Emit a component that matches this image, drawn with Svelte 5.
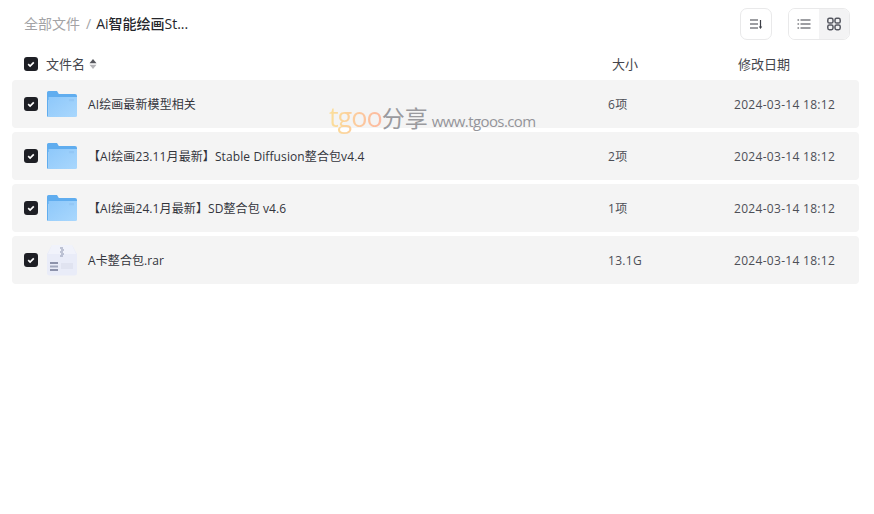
<script>
  const rows = [
    { name: 'AI绘画最新模型相关', size: '6项', type: 'folder' },
    { name: '【AI绘画23.11月最新】Stable Diffusion整合包v4.4', size: '2项', type: 'folder' },
    { name: '【AI绘画24.1月最新】SD整合包 v4.6', size: '1项', type: 'folder' },
    { name: 'A卡整合包.rar', size: '13.1G', type: 'rar' },
  ];
</script>

{#snippet check()}
  <span class="check">
    <svg width="14" height="14" viewBox="0 0 14 14">
      <path d="M4.200 7.200 6.100 9 9.800 5.300" fill="none" stroke="#fff" stroke-width="1.700" />
    </svg>
  </span>
{/snippet}

<div class="page">
  <header class="top">
    <nav class="crumbs">
      <span class="root">全部文件</span>
      <span class="slash">/</span>
      <span class="current">Ai智能绘画St...</span>
    </nav>
    <div class="actions">
      <button class="btn sort" aria-label="排序">
        <svg width="14" height="14" viewBox="0 0 14 14">
          <path d="M1 3h8M1 7h8M1 11h8" stroke="#3c3e46" stroke-width="1.200" fill="none" />
          <path d="M11.500 3v7" stroke="#3c3e46" stroke-width="1.200" fill="none" />
          <path d="M9.800 9.500h3.400l-1.700 2.500z" fill="#3c3e46" />
        </svg>
      </button>
      <div class="switch">
        <button class="seg" aria-label="列表">
          <svg width="14" height="14" viewBox="0 0 14 14">
            <path d="M3.500 3h10M3.500 7h10M3.500 11h10" stroke="#3c3e46" stroke-width="1.200" fill="none" />
            <path d="M0.500 3h1.600M0.500 7h1.600M0.500 11h1.600" stroke="#3c3e46" stroke-width="1.200" fill="none" />
          </svg>
        </button>
        <button class="seg on" aria-label="网格">
          <svg width="14" height="14" viewBox="0 0 14 14" fill="none" stroke="#555760" stroke-width="1.500">
            <rect x="0.800" y="1.300" width="5.200" height="4.800" rx="1.600" />
            <rect x="8" y="1.300" width="5.200" height="4.800" rx="1.600" />
            <rect x="0.800" y="7.900" width="5.200" height="4.800" rx="1.600" />
            <rect x="8" y="7.900" width="5.200" height="4.800" rx="1.600" />
          </svg>
        </button>
      </div>
    </div>
  </header>

  <div class="head">
    {@render check()}
    <span class="h-name">
      文件名
      <svg class="caret" width="8" height="12" viewBox="0 0 8 12">
        <path d="M4 1 7.500 5.200H.5z" fill="#55565c" />
        <path d="M4 11 .5 6.800h7z" fill="#b4b4b8" />
      </svg>
    </span>
    <span>大小</span>
    <span>修改日期</span>
  </div>

  <div class="list">
    {#each rows as r}
      <div class="row">
        {@render check()}
        {#if r.type === 'folder'}
          <svg class="icon" width="30" height="28" viewBox="0 0 30 28">
            <defs>
              <linearGradient id="front" x1="0" y1="0" x2="1" y2="1">
                <stop offset="0" stop-color="#8ec8fa" />
                <stop offset="1" stop-color="#a9d7fd" />
              </linearGradient>
            </defs>
            <path d="M0 2.500a1.500 1.500 0 0 1 1.500-1.500H10l1.800 3H28a2 2 0 0 1 2 2V10H0z" fill="#60adef" />
            <path d="M0 5h1.500v22A1.500 1.500 0 0 1 0 25.500z" fill="#60adef" />
            <path d="M1.500 7H30v18.500a1.500 1.500 0 0 1-1.500 1.500h-27z" fill="url(#front)" />
            <rect x="22" y="9" width="5" height="2.200" fill="#93c7f6" />
          </svg>
        {:else}
          <svg class="icon" width="30" height="32" viewBox="0 0 30 32">
            <path d="M5 1h20l5 9v19a2.500 2.500 0 0 1-2.500 2.500h-25A2.500 2.500 0 0 1 0 29V10z" fill="#e9ecf8" />
            <path d="M5 1h20l4 9H1z" fill="#f1f3fb" />
            <path d="M13 4h3M14 6h3M13 8h3M14 10h3M13 12h3" stroke="#8b93ad" stroke-width="1.200" />
            <rect x="3" y="18" width="8" height="2" fill="#8d93ab" />
            <rect x="3" y="21.500" width="8" height="2" fill="#a2a8bd" />
            <rect x="3" y="25" width="8" height="2" fill="#8d93ab" />
            <rect x="14" y="19" width="12" height="6" fill="#e0e3f0" />
          </svg>
        {/if}
        <span class="name">{r.name}</span>
        <span class="size">{r.size}</span>
        <span class="date">2024-03-14 18:12</span>
      </div>
    {/each}
  </div>

  <div class="mark">
    <span class="tgoo">tgoo</span><span class="share">分享</span><span class="url">www.tgoos.com</span>
  </div>
</div>

<style>
  :global(body) {
    margin: 0;
    background: #fff;
  }

  .page {
    position: relative;
    width: 874px;
    height: 514px;
    font-family: "Open Sans", "Noto Sans CJK SC", sans-serif;
    color: #25262b;
    overflow: hidden;
  }

  .top {
    display: flex;
    align-items: center;
    justify-content: space-between;
    height: 32px;
    padding: 8px 24px 0;
  }

  .crumbs {
    display: flex;
    align-items: center;
    font-size: 14px;
    line-height: 30px;
    height: 30px;
  }

  .root { color: #a3a3a6; }
  .slash { color: #a3a3a6; margin: 0 5px 0 6px; }
  .current { color: #25262b; font-weight: 500; }

  .actions {
    display: flex;
    gap: 16px;
  }

  .btn, .switch {
    box-sizing: border-box;
    height: 32px;
    border: 1px solid #e9e9ea;
    border-radius: 7px;
    background: #fff;
    padding: 0;
  }

  .btn {
    width: 32px;
    display: flex;
    align-items: center;
    justify-content: center;
  }

  .switch {
    display: flex;
    width: 62px;
    overflow: hidden;
  }

  .seg {
    flex: 1;
    border: 0;
    padding: 0;
    background: #fff;
    display: flex;
    align-items: center;
    justify-content: center;
  }

  .seg.on { background: #f3f3f4; }

  .head {
    display: grid;
    grid-template-columns: 14px 574px 126px auto;
    align-items: center;
    height: 32px;
    margin-top: 8px;
    padding-left: 24px;
    font-size: 13px;
    line-height: 18px;
    color: #44454c;
  }

  .head span:not(.check) { margin-top: -1px; }

  .check {
    width: 14px;
    height: 14px;
    background: #1e1f25;
    border-radius: 3px;
    display: block;
  }

  .check svg { display: block; }

  .h-name {
    display: flex;
    align-items: center;
    gap: 4px;
    padding-left: 8px;
  }

  .list {
    display: flex;
    flex-direction: column;
    gap: 4px;
    margin: 0 15px 0 12px;
  }

  .row {
    display: grid;
    grid-template-columns: 14px 39px 531px 126px auto;
    align-items: center;
    height: 48px;
    padding-left: 12px;
    background: #f4f4f4;
    border-radius: 4px;
    font-size: 12px;
    line-height: 16px;
    color: #33353c;
  }

  .icon {
    margin-left: 9px;
    display: block;
  }

  .name {
    white-space: nowrap;
    padding: 2px 0 0 11px;
    letter-spacing: 0.1px;
  }

  .size, .date {
    color: #4d4f57;
    letter-spacing: 0.3px;
    padding-top: 2px;
  }

  .mark {
    position: absolute;
    left: 329px;
    top: 98px;
    display: flex;
    align-items: baseline;
    white-space: nowrap;
    pointer-events: none;
  }

  .tgoo {
    font-size: 27px;
    letter-spacing: -1px;
    background: linear-gradient(90deg, #fbdf9a, #fdb9a0);
    background-clip: text;
    -webkit-background-clip: text;
    color: transparent;
  }

  .share {
    font-size: 23px;
    color: #9a9a9e;
  }

  .url {
    font-size: 15px;
    letter-spacing: -0.6px;
    color: #94949a;
    margin-left: 4px;
  }
</style>
